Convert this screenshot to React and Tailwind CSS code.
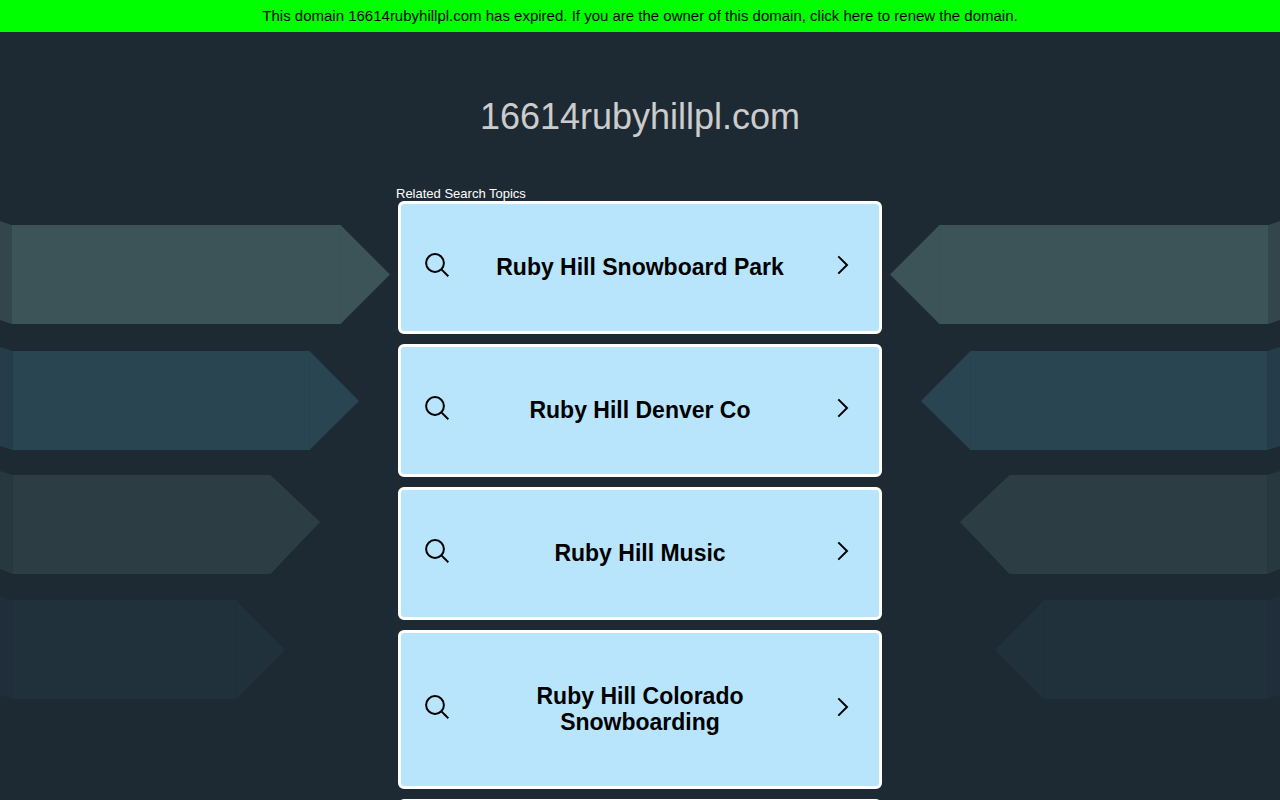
const topics = [
  "Ruby Hill Snowboard Park",
  "Ruby Hill Denver Co",
  "Ruby Hill Music",
  "Ruby Hill Colorado Snowboarding",
  "Ruby Hill Park",
];

// left half of the ribbons, the right half is the same group mirrored
function Ribbons() {
  return (
    <g>
      <path d="M0 1L11.5 5V104L0 100Z" fill="#32464c" />
      <path d="M11.5 5H340.5L390 54.5L340.5 104H11.5Z" fill="#3c5457" />
      <path d="M340.5 5V104" stroke="#384f53" />

      <path d="M0 127L12.5 131V230L0 226Z" fill="#253c49" />
      <path d="M12.5 131H309.5L359 181L309.5 230H12.5Z" fill="#294552" />
      <path d="M309.5 131V230" stroke="#27414e" />

      <path d="M0 251L12.5 255V354L0 349Z" fill="#28383f" />
      <path d="M12.5 255H270.5L320 302L270.5 354H12.5Z" fill="#2c3e44" />

      <path d="M0 376L12.5 380V479L0 475Z" fill="#1f2e3a" />
      <path d="M12.5 380H236L285 430L236 479H12.5Z" fill="#20313c" />
      <path d="M235.5 380V479" stroke="#1f2f39" />
    </g>
  );
}

function Background() {
  return (
    <svg
      viewBox="0 0 1280 480"
      preserveAspectRatio="xMidYMin slice"
      aria-hidden="true"
      className="absolute inset-x-0 top-[220px] h-[480px] w-full"
    >
      <Ribbons />
      <g transform="translate(1280 0) scale(-1 1)">
        <Ribbons />
      </g>
    </svg>
  );
}

function SearchIcon() {
  return (
    <svg
      viewBox="0 0 24 24"
      fill="none"
      stroke="currentColor"
      strokeWidth="2"
      aria-hidden="true"
      className="-mt-0.5 mb-0.5 size-6 shrink-0"
    >
      <circle cx="10" cy="10" r="8.9" />
      <path d="M16.4 16.4L23.3 23.3" />
    </svg>
  );
}

function ChevronIcon() {
  return (
    <svg
      viewBox="0 0 24 24"
      fill="none"
      stroke="currentColor"
      strokeWidth="2"
      aria-hidden="true"
      className="-mt-0.5 mb-0.5 size-6 shrink-0"
    >
      <path d="M7.3 3.4L16 12L7.3 20.6" />
    </svg>
  );
}

function TopicCard({ title }) {
  return (
    <a
      href="#"
      className="flex items-center justify-between rounded-md border-3 border-white bg-[#b8e5fc] px-6 pt-[50px] pb-[51px] text-black"
    >
      <SearchIcon />
      <span className="max-w-[300px] text-center text-[23px] leading-[26px] font-bold">
        {title}
      </span>
      <ChevronIcon />
    </a>
  );
}

export default function App() {
  return (
    <div className="relative min-h-screen bg-[#1e2a33] font-['Liberation_Sans',Arial,sans-serif]">
      <Background />

      <div className="relative">
        <a
          href="#"
          className="block bg-[#00ff00] px-4 py-1.5 text-center text-[15px] leading-5 text-black"
        >
          This domain 16614rubyhillpl.com has expired. If you are the owner of
          this domain, click here to renew the domain.
        </a>

        <h1 className="pt-16 text-center text-[36px] leading-[42px] text-[#cccccc]">
          16614rubyhillpl.com
        </h1>

        <main className="mx-auto max-w-[488px] pt-12 pb-10">
          <h2 className="text-[13px] leading-[15px] text-white">
            Related Search Topics
          </h2>
          <ul className="flex flex-col gap-2.5 px-0.5">
            {topics.map((title) => (
              <li key={title}>
                <TopicCard title={title} />
              </li>
            ))}
          </ul>
        </main>
      </div>
    </div>
  );
}
